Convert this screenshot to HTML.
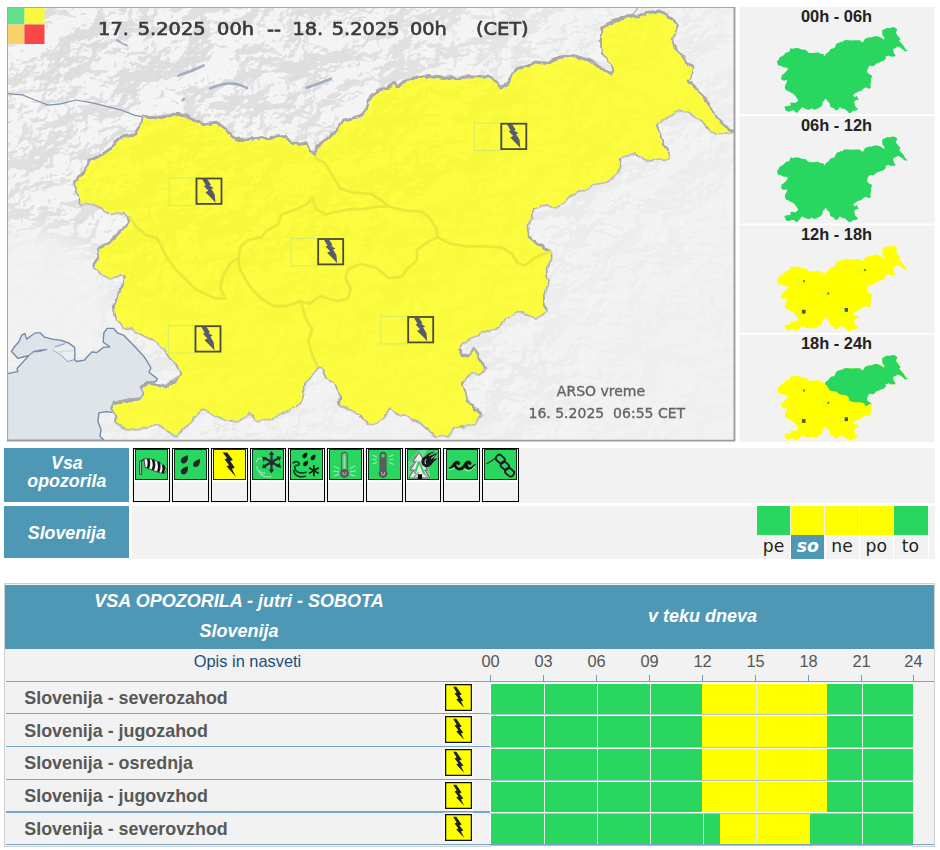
<!DOCTYPE html>
<html lang="sl"><head><meta charset="utf-8"><title>ARSO opozorila</title>
<style>
html,body{margin:0;padding:0;background:#fff}
body{width:940px;height:850px;position:relative;overflow:hidden;font-family:"Liberation Sans",sans-serif}
.abs{position:absolute}
.mt{filter:url(#b1)}
.lab{position:absolute;left:4.2px;width:125.3px;background:#4f98b5;color:#fff;font-weight:bold;font-style:italic;text-align:center;font-size:17.8px}
.gr{position:absolute;left:132px;width:802.5px;background:#f2f2f2}
.ic{position:absolute;top:447.8px;height:52px;border:1.4px solid #000;background:linear-gradient(#fff 0,#fff 33px,#f2f2f2 33px)}
.wp{position:absolute;top:.6px;width:32.4px;height:31px;background:#10301a}
.wi{position:absolute;left:.9px;top:.5px;width:30.6px;height:29.5px}
.sq{position:absolute;top:506px;width:33.2px;height:28.8px}
.dl{position:absolute;top:535px;width:33.2px;height:24px;text-align:center;font-family:"DejaVu Sans","Liberation Sans",sans-serif;font-size:17.2px;line-height:23px;color:#222}
.g{background:#29d65f}.y{background:#ffff00}
.th{position:absolute;top:585.3px;height:63.5px;background:#4f98b5;color:#fff;font-weight:bold;font-style:italic;text-align:center;font-size:18px}
.rl{position:absolute;left:5.5px;height:1.3px;background:#79a5c4}
.rn{position:absolute;left:24.3px;height:31px;line-height:31px;font-weight:bold;font-size:17.87px;color:#585858;white-space:nowrap}
.bi{position:absolute;left:444.8px;width:27px;height:27px;box-shadow:0 0 0 1.5px #f9f9f9}
.bi svg{display:block}
.bar{position:absolute;height:30.6px}
.bg2{position:absolute;left:490.3px;width:422.3px;height:32.6px;background:linear-gradient(#fff 0,#fff 30.6px,#b0c1dd 30.6px,#b0c1dd 31.6px,#fff 31.6px)}
.vs{position:absolute;width:1.2px;height:30.6px;background:#e3f1e6}
.hl{position:absolute;top:651.8px;width:30px;text-align:center;font-size:16.4px;color:#555}
.tk{position:absolute;top:675.3px;width:1.1px;height:6px;background:#6f9fc0}
</style></head><body>
<svg width="0" height="0" style="position:absolute"><defs><filter id="ib"><feGaussianBlur stdDeviation="0.3"/></filter></defs></svg>
<svg class="abs" style="left:0;top:0" width="940" height="450" viewBox="0 0 940 450">
<defs>
<path id="slo" d="M143 116.6 L148 119 L162 120 L167 116.6 L185 117.4 L198 124 L208 125.5 L215.7 124 L226 132 L236 141 L249 141 L261.7 139.6 L284.7 138.3 L292 144.7 L300 146 L305.3 145 L311.7 152.8 L315.5 157.9 L318 147.7 L328.3 140 L337.2 132.3 L343.6 122 L353.8 119.6 L365.3 115.7 L369 101.7 L378 91.5 L388.3 90.2 L393.4 85 L398.5 89 L407.4 81.3 L422.8 77.4 L443.2 80 L466.2 78.7 L489 78.7 L496.8 83.8 L499.4 89 L508.3 86.4 L513.4 76.2 L517.7 70.1 L529.1 67.6 L535.5 63.7 L545.7 65 L561 59.9 L573.8 57.3 L586.6 61.2 L599.4 67.6 L608.3 73.9 L612.1 76.5 L613.4 68.8 L610.9 62.4 L603.2 53.5 L601.9 43.3 L602.4 29.3 L609.6 25.4 L619.8 20.3 L630 16.5 L637.7 19 L647.9 15.2 L658.1 13.9 L667 16.5 L677.2 25.4 L676 31.8 L670.9 38.2 L673.4 48.4 L681.1 56.1 L686.2 65 L692.6 67.6 L691.3 76.5 L686.2 80.3 L693.8 89.3 L704 99.5 L711.7 109.7 L716.8 119.9 L724.5 127.6 L732.1 131.4 L721.9 132.7 L711.7 131.4 L706.6 125 L698.9 118.6 L688.7 112.2 L679.8 109.7 L670.9 114.8 L660.6 119.9 L655.5 126.3 L659.4 135.2 L661.9 145.4 L668.3 150.5 L667 158.2 L655.5 158.2 L645.3 159.5 L635.1 153.1 L627.4 155.6 L618.5 158.2 L621.1 167.1 L614.7 174.8 L607 181.2 L594.3 183.7 L584 188.8 L571.3 193.9 L563.4 203 L555.7 206.8 L543 204.3 L534 208.1 L531.5 217 L526.4 226 L527.7 237.4 L537.9 246.4 L550.6 251.5 L550.6 259.1 L545.5 268.1 L546.8 282.1 L543 294.9 L543 306.4 L546.8 311.5 L535.3 317.9 L527.7 312.8 L518.7 311.5 L512.3 314 L504.7 319.1 L498.3 326.8 L484.3 330.6 L474 335.7 L461.3 343.4 L457.4 349.8 L462.6 357.4 L468.9 356.2 L474 351.1 L477.9 358.7 L484.3 368.9 L479.1 374 L471.5 371.5 L469.1 373.6 L461.5 382.6 L465.3 395.3 L467.9 404.3 L480.6 415.7 L474.3 423.4 L464 426 L455.1 426 L447.4 434.9 L436 436.2 L425.7 426 L415.5 418.3 L407.9 415.7 L400.2 414.5 L390 406.8 L384.9 415.7 L377.2 423.4 L367 423.4 L360.6 413.2 L351.7 410.6 L340.2 404.3 L341.5 395.3 L336.4 385.1 L327.4 377.4 L322.3 367.2 L317.2 366 L313.4 373.6 L304.5 382.6 L301.9 397.9 L294.3 406.8 L282.8 411.9 L270 419.6 L257.9 419.6 L248.9 413.2 L238.7 420.9 L226 419.6 L213.2 413.2 L201.7 408.1 L197.9 411.9 L192.8 418.3 L185.1 426 L177.4 434.9 L169.8 433.6 L162.1 426 L157 423.4 L146.8 426 L136.6 429.8 L126.4 428.5 L117.4 423.4 L117.4 415.7 L112.3 409.4 L114.9 404.3 L128.9 401.7 L141.7 400.4 L145.5 395.3 L141.7 387.7 L149.4 385.1 L159.6 386.4 L167.2 387.7 L176.2 381.3 L182.6 373.6 L174.9 362.1 L167.2 351.9 L157 341.7 L144.3 335.3 L134 328.9 L123.8 326.4 L117.4 320 L114.9 308.5 L118.7 295.7 L125.1 285.5 L125.9 275.3 L120 274 L111.1 277.9 L102.1 274 L94.5 266.4 L99.6 259.6 L98.3 250.6 L109.8 244.3 L118.7 235.3 L127.7 226.4 L130 217.4 L123.8 212.3 L111 212.3 L98.3 206 L88 202 L81.7 204.7 L79 194.5 L75.3 183 L85.5 172.8 L88 163.8 L100.9 157.4 L113.6 148.5 L116 142 L126.4 137 L136.6 135.7 L141 128Z"/>
<path id="ne" d="M315.5 157.9 L318 147.7 L328.3 140 L337.2 132.3 L343.6 122 L353.8 119.6 L365.3 115.7 L369 101.7 L378 91.5 L388.3 90.2 L393.4 85 L398.5 89 L407.4 81.3 L422.8 77.4 L443.2 80 L466.2 78.7 L489 78.7 L496.8 83.8 L499.4 89 L508.3 86.4 L513.4 76.2 L517.7 70.1 L529.1 67.6 L535.5 63.7 L545.7 65 L561 59.9 L573.8 57.3 L586.6 61.2 L599.4 67.6 L608.3 73.9 L612.1 76.5 L613.4 68.8 L610.9 62.4 L603.2 53.5 L601.9 43.3 L602.4 29.3 L609.6 25.4 L619.8 20.3 L630 16.5 L637.7 19 L647.9 15.2 L658.1 13.9 L667 16.5 L677.2 25.4 L676 31.8 L670.9 38.2 L673.4 48.4 L681.1 56.1 L686.2 65 L692.6 67.6 L691.3 76.5 L686.2 80.3 L693.8 89.3 L704 99.5 L711.7 109.7 L716.8 119.9 L724.5 127.6 L732.1 131.4 L721.9 132.7 L711.7 131.4 L706.6 125 L698.9 118.6 L688.7 112.2 L679.8 109.7 L670.9 114.8 L660.6 119.9 L655.5 126.3 L659.4 135.2 L661.9 145.4 L668.3 150.5 L667 158.2 L655.5 158.2 L645.3 159.5 L635.1 153.1 L627.4 155.6 L618.5 158.2 L621.1 167.1 L614.7 174.8 L607 181.2 L594.3 183.7 L584 188.8 L571.3 193.9 L563.4 203 L555.7 206.8 L543 204.3 L534 208.1 L531.5 217 L526.4 226 L527.7 237.4 L537.9 246.4 L550.6 251.5 L543 254 L532.8 259.1 L525.1 265.5 L517.4 263 L512.3 254 L502.1 247.7 L484.3 246.4 L466.4 246.4 L451.1 243.8 L437.4 237.2 L436.2 228.3 L429.8 218.1 L422.1 211.7 L404.3 210.4 L388.9 206.6 L381.3 200.2 L371.1 193.8 L353.2 192.6 L340.4 188.7 L332.8 176 L325.1 163.2 L315.5 157.9Z"/>
<clipPath id="sloclip"><use href="#slo"/></clipPath>
<clipPath id="mapclip"><rect x="7" y="7" width="728" height="434"/></clipPath>
<filter id="b1"><feGaussianBlur stdDeviation="0.45"/></filter>
<filter id="rough" x="0" y="0" width="940" height="450" filterUnits="userSpaceOnUse"><feTurbulence type="fractalNoise" baseFrequency="0.11" numOctaves="2" seed="7" result="t"/><feDisplacementMap in="SourceGraphic" in2="t" scale="5" xChannelSelector="R" yChannelSelector="G"/></filter>
<filter id="b2"><feGaussianBlur stdDeviation="0.7"/></filter>
<filter id="relief" x="0" y="0" width="100%" height="100%" color-interpolation-filters="sRGB">
<feTurbulence type="fractalNoise" baseFrequency="0.02 0.027" numOctaves="5" seed="4" result="n"/>
<feDiffuseLighting in="n" surfaceScale="30" diffuseConstant="1.15" lighting-color="#ffffff" result="l"><feDistantLight azimuth="230" elevation="52"/></feDiffuseLighting>
<feComponentTransfer in="l"><feFuncR type="table" tableValues="0.865 0.865 0.87 0.872 0.876 0.885 0.935 0.96 0.96"/><feFuncG type="table" tableValues="0.865 0.865 0.87 0.872 0.876 0.885 0.935 0.96 0.96"/><feFuncB type="table" tableValues="0.865 0.865 0.87 0.872 0.876 0.885 0.935 0.96 0.96"/></feComponentTransfer>
</filter>
<radialGradient id="fade1" cx="0.15" cy="0.1" r="0.95"><stop offset="0" stop-color="#fff" stop-opacity="1"/><stop offset="0.45" stop-color="#fff" stop-opacity="0.85"/><stop offset="0.7" stop-color="#fff" stop-opacity="0.4"/><stop offset="1" stop-color="#fff" stop-opacity="0.15"/></radialGradient>
<radialGradient id="fade3"><stop offset="0" stop-color="#000" stop-opacity="0.9"/><stop offset="0.65" stop-color="#000" stop-opacity="0.8"/><stop offset="1" stop-color="#000" stop-opacity="0"/></radialGradient>
<radialGradient id="fade2"><stop offset="0" stop-color="#fff" stop-opacity="0.3"/><stop offset="1" stop-color="#fff" stop-opacity="0"/></radialGradient>
<mask id="rm"><rect x="7" y="7" width="728" height="434" fill="url(#fade1)"/><ellipse cx="500" cy="380" rx="110" ry="80" fill="url(#fade2)"/><ellipse cx="240" cy="430" rx="120" ry="40" fill="url(#fade2)"/><ellipse cx="30" cy="300" rx="100" ry="85" fill="url(#fade3)"/></mask>
</defs>
<rect x="7" y="7" width="728" height="434" fill="#f3f3f3"/>
<g clip-path="url(#mapclip)">
<g mask="url(#rm)"><rect x="7" y="7" width="728" height="434" filter="url(#relief)"/></g>
<path d="M7.4 373.6 L17.8 371.7 L17.1 368.5 L22.9 362.1 L28.6 355.7 L23 357 L17.8 358.3 L11.4 351.3 L15 346 L19 341.7 L21.6 335.3 L24.8 333.4 L26.7 339.1 L31.8 335.3 L35.6 332.8 L40.1 332.8 L44.6 337.2 L52.2 339.1 L61.2 340.4 L68.8 343 L74.6 347.4 L75 354 L74.6 359.6 L76.5 361.5 L84.2 360.2 L88 356 L91.8 351.9 L96.9 352.6 L103.3 347.4 L109.7 346.8 L103.3 342.3 L103.5 337 L103.9 332.8 L107.1 328.3 L113.5 328.3 L117.3 332.8 L123.4 335.1 L134 345.7 L144.7 357.4 L151 368 L148.9 372.3 L157.4 378.7 L155.3 381.9 L146.8 381.9 L140.4 387.2 L146.8 393.6 L142.6 397.9 L127.7 400 L112.8 404.3 L116 412.8 L106.4 411.7 L98.9 412.8 L97.9 421.3 L101 429.8 L100 436.2 L104.3 440.4 L7.4 440.4Z" fill="#dde5eb" stroke="#7487a8" stroke-width="1.35" stroke-linejoin="round"/>
<g fill="none" stroke="#7d90ad" stroke-width="0.9"><path d="M28.6 355.7 L33 351.5 L40 350 L47.1 349.4 L40 351.5 L33.7 351.9Z" fill="#6f84a6"/><path d="M52.9 350 L61 355 L67.6 361.5 L74.6 359.6 M54.8 346.8 L65 343.6 M57.3 351.9 L74.6 350.6 M59.9 353.8 L63.7 351.3" /><path d="M53 350 L62 355.5 L67.6 361 L74 359 L74 348 L66 344 Z" fill="#f0f2f4" stroke="none" opacity=".7"/></g>
<path d="M7 93.6 L22.3 94.9 L35.1 100 L47.9 105.1 L60.6 103.8 L75.9 100 L91.3 102.6 L106.6 106.4 L121.9 110.2 L134.7 115.3 L142.3 116.6" fill="none" stroke="#7e91ad" stroke-width="1.2"/>
<g fill="none" stroke="#8a9bb5" stroke-linecap="round" opacity=".75"><path d="M178 75.7 Q190 72 203.6 65.5" stroke-width="2.6"/><path d="M210 88.5 Q220 84 229 83.5 T247 88" stroke-width="2.6"/><path d="M182.5 100.5 l1.5 -2" stroke-width="2.4"/><path d="M306.6 87.7 Q318 84 330.9 78.7" stroke-width="2.6"/><path d="M117 40 Q122 44 127 45.5" stroke-width="2"/><path d="M638 7 Q636 12 631 16" stroke-width="1.2"/><path d="M725 128 Q731 131 735 131" stroke-width="1.2"/></g>
<g filter="url(#rough)"><use href="#slo" fill="none" stroke="#c2c2c0" stroke-width="3.8" stroke-linejoin="round"/><use href="#slo" transform="translate(-.3 -1.4)" fill="none" stroke="#a9a9a7" stroke-width="3.6" stroke-linejoin="round"/>
<g clip-path="url(#sloclip)"><rect x="60" y="7" width="680" height="434" fill="#f3f3f3"/><g mask="url(#rm)"><rect x="7" y="7" width="728" height="434" filter="url(#relief)"/></g></g>
<use href="#slo" fill="#ffff00" fill-opacity="0.74"/></g>
<g fill="none" stroke="#e8e63a" stroke-width="2.8" stroke-linejoin="round" stroke-linecap="round" opacity="0.9" filter="url(#b2)">
<path d="M312.3 197.7 L307.2 204 L297 209.1 L281.7 214.3 L277.9 224.5 L266.4 230.9 L261.3 237.2 L248.5 239.8 L240.9 246.2 L238.3 257.7 L239.6 267.9 L244.7 278.1 L251.1 288.3 L261.3 298.5 L274 306.2 L286.8 306.2 L299.6 301.1 L309.8 303.6 L320 296 L327.7 298.5 L337.9 301.1 L348.1 298.5 L350.6 288.3 L345.5 278.1 L348.1 269.1 L360.9 264 L376.2 267.9 L388.9 278.1 L401.7 276.8 L406.8 269.1 L417 260.2 L417 250 L427.2 242.3 L437.4 237.2 L436.2 228.3 L429.8 218.1 L422.1 211.7 L404.3 210.4 L388.9 206.6 L376.2 206.6 L363.4 209.1 L350.6 209.1 L337.9 211.7 L325.1 214.3 L316.2 209.1Z"/>
<path d="M315.5 157.9 L325.1 163.2 L332.8 176 L340.4 188.7 L353.2 192.6 L371.1 193.8 L381.3 200.2 L388.9 206.6"/>
<path d="M130 217.4 L136.6 227.7 L146.8 235.3 L157 237.9 L162.1 248.1 L167.2 258.3 L174.9 268.5 L185.1 278.7 L195.3 288.9 L205.5 294 L215.3 298.5 L225.5 298.5 L220.4 288.3 L223 275.5 L230.6 262.8 L238.3 257.7"/>
<path d="M299.6 301.1 L301.9 304.7 L305.7 318.7 L312.1 328.9 L308.3 341.7 L312.1 354.5 L317.2 366"/>
<path d="M437.4 237.2 L451.1 243.8 L466.4 246.4 L484.3 246.4 L502.1 247.7 L512.3 254 L517.4 263 L525.1 265.5 L532.8 259.1 L543 254 L550.6 251.5"/>
</g>
<rect x="169.3" y="177.9" width="26.5" height="27.5" fill="none" stroke="#cdee6a" stroke-width="1"/>
<rect x="196.5" y="178.5" width="25" height="25.4" fill="none" stroke="#4b4a3c" stroke-width="1.8"/>
<path transform="translate(195.5 177.5)" d="M6.6 1.4 L11.8 1.4 L15.5 7.4 L13.6 7.8 L18.1 10.4 L15.9 11.5 L19.2 17.1 L20 25.3 L16.6 21.5 L9.9 14.8 L12.9 13.3 L8.4 8.5 L10.3 7.8Z" fill="#565b6c" filter="url(#b1)"/>
<rect x="474.1" y="123.1" width="26.5" height="27.5" fill="none" stroke="#cdee6a" stroke-width="1"/>
<rect x="501.3" y="123.7" width="25" height="25.4" fill="none" stroke="#4b4a3c" stroke-width="1.8"/>
<path transform="translate(500.3 122.7)" d="M6.6 1.4 L11.8 1.4 L15.5 7.4 L13.6 7.8 L18.1 10.4 L15.9 11.5 L19.2 17.1 L20 25.3 L16.6 21.5 L9.9 14.8 L12.9 13.3 L8.4 8.5 L10.3 7.8Z" fill="#565b6c" filter="url(#b1)"/>
<rect x="291" y="238.4" width="26.5" height="27.5" fill="none" stroke="#cdee6a" stroke-width="1"/>
<rect x="318.2" y="239" width="25" height="25.4" fill="none" stroke="#4b4a3c" stroke-width="1.8"/>
<path transform="translate(317.2 238)" d="M6.6 1.4 L11.8 1.4 L15.5 7.4 L13.6 7.8 L18.1 10.4 L15.9 11.5 L19.2 17.1 L20 25.3 L16.6 21.5 L9.9 14.8 L12.9 13.3 L8.4 8.5 L10.3 7.8Z" fill="#565b6c" filter="url(#b1)"/>
<rect x="168.3" y="325.6" width="26.5" height="27.5" fill="none" stroke="#cdee6a" stroke-width="1"/>
<rect x="195.5" y="326.2" width="25" height="25.4" fill="none" stroke="#4b4a3c" stroke-width="1.8"/>
<path transform="translate(194.5 325.2)" d="M6.6 1.4 L11.8 1.4 L15.5 7.4 L13.6 7.8 L18.1 10.4 L15.9 11.5 L19.2 17.1 L20 25.3 L16.6 21.5 L9.9 14.8 L12.9 13.3 L8.4 8.5 L10.3 7.8Z" fill="#565b6c" filter="url(#b1)"/>
<rect x="381" y="316.4" width="26.5" height="27.5" fill="none" stroke="#cdee6a" stroke-width="1"/>
<rect x="408.2" y="317" width="25" height="25.4" fill="none" stroke="#4b4a3c" stroke-width="1.8"/>
<path transform="translate(407.2 316)" d="M6.6 1.4 L11.8 1.4 L15.5 7.4 L13.6 7.8 L18.1 10.4 L15.9 11.5 L19.2 17.1 L20 25.3 L16.6 21.5 L9.9 14.8 L12.9 13.3 L8.4 8.5 L10.3 7.8Z" fill="#565b6c" filter="url(#b1)"/>
</g>
<g filter="url(#b1)"><rect x="7" y="7" width="17.5" height="17.5" fill="#62df8b"/><rect x="24.5" y="7" width="20" height="17.5" fill="#f9f840"/><rect x="7" y="24.5" width="17.5" height="19.5" fill="#f8d268"/><rect x="24.5" y="24.5" width="20" height="19.5" fill="#f9464a"/></g>
<path d="M7.5 441 V7.5 H735" fill="none" stroke="#a8a8a8" stroke-width="1"/>
<path d="M734.5 7 V440.7 H7" fill="none" stroke="#9a9a9a" stroke-width="1.8"/>
<text transform="translate(98.1 35.2) scale(1.09 1)" font-family="DejaVu Sans, Liberation Sans, sans-serif" font-size="17.8" fill="#3a3a3a" stroke="#3a3a3a" stroke-width="0.65" class="mt">17.</text>
<text transform="translate(137.7 35.2) scale(1.09 1)" font-family="DejaVu Sans, Liberation Sans, sans-serif" font-size="17.8" fill="#3a3a3a" stroke="#3a3a3a" stroke-width="0.65" class="mt">5.2025</text>
<text transform="translate(217.1 35.2) scale(1.09 1)" font-family="DejaVu Sans, Liberation Sans, sans-serif" font-size="17.8" fill="#3a3a3a" stroke="#3a3a3a" stroke-width="0.65" class="mt">00h</text>
<text transform="translate(267 35.2) scale(1.09 1)" font-family="DejaVu Sans, Liberation Sans, sans-serif" font-size="17.8" fill="#3a3a3a" stroke="#3a3a3a" stroke-width="0.65" class="mt">--</text>
<text transform="translate(292.4 35.2) scale(1.09 1)" font-family="DejaVu Sans, Liberation Sans, sans-serif" font-size="17.8" fill="#3a3a3a" stroke="#3a3a3a" stroke-width="0.65" class="mt">18.</text>
<text transform="translate(331.7 35.2) scale(1.09 1)" font-family="DejaVu Sans, Liberation Sans, sans-serif" font-size="17.8" fill="#3a3a3a" stroke="#3a3a3a" stroke-width="0.65" class="mt">5.2025</text>
<text transform="translate(409.9 35.2) scale(1.09 1)" font-family="DejaVu Sans, Liberation Sans, sans-serif" font-size="17.8" fill="#3a3a3a" stroke="#3a3a3a" stroke-width="0.65" class="mt">00h</text>
<text transform="translate(475.9 35.2) scale(1.09 1)" font-family="DejaVu Sans, Liberation Sans, sans-serif" font-size="17.8" fill="#3a3a3a" stroke="#3a3a3a" stroke-width="0.65" class="mt">(CET)</text>
<text x="601" y="395.6" text-anchor="middle" font-family="DejaVu Sans, Liberation Sans, sans-serif" font-size="14" fill="#646464" stroke="#646464" stroke-width="0.35" class="mt">ARSO vreme</text>
<text x="528.5" y="418.2" font-family="DejaVu Sans, Liberation Sans, sans-serif" font-size="14" fill="#646464" stroke="#646464" stroke-width="0.35" class="mt" xml:space="preserve">16. 5.2025  06:55 CET</text>
<rect x="739.5" y="6.8" width="195" height="107.4" fill="#f2f2f2"/>
<g transform="translate(761.8 24.3) scale(0.2 0.2032)"><use href="#slo" fill="#29d65f"/></g>
<text x="836.5" y="21.5" text-anchor="middle" font-family="Liberation Sans, sans-serif" font-weight="bold" font-size="16.4" fill="#222">00h - 06h</text>
<rect x="739.5" y="116.1" width="195" height="107.4" fill="#f2f2f2"/>
<g transform="translate(761.8 133.6) scale(0.2 0.2032)"><use href="#slo" fill="#29d65f"/></g>
<text x="836.5" y="130.8" text-anchor="middle" font-family="Liberation Sans, sans-serif" font-weight="bold" font-size="16.4" fill="#222">06h - 12h</text>
<rect x="739.5" y="225.4" width="195" height="107.4" fill="#f2f2f2"/>
<g transform="translate(761.8 242.9) scale(0.2 0.2032)"><use href="#slo" fill="#ffff00"/></g>
<rect x="803.2" y="280.1" width="1.6" height="2.2" fill="#3a3a20" opacity="0.7"/>
<rect x="798" y="279.6" width="4" height="4.5" fill="none" stroke="#c9ef50" stroke-width="0.5"/>
<rect x="864.2" y="269" width="1.6" height="2.2" fill="#3a3a20" opacity="0.7"/>
<rect x="859" y="268.5" width="4" height="4.5" fill="none" stroke="#c9ef50" stroke-width="0.5"/>
<rect x="827.5" y="292.4" width="1.6" height="2.2" fill="#3a3a20" opacity="0.7"/>
<rect x="822.3" y="291.9" width="4" height="4.5" fill="none" stroke="#c9ef50" stroke-width="0.5"/>
<rect x="801.9" y="309.8" width="3.6" height="3.8" fill="#2a2a18" opacity="0.8"/>
<rect x="797.8" y="309.6" width="4" height="4.5" fill="none" stroke="#c9ef50" stroke-width="0.5"/>
<rect x="844.4" y="308" width="3.6" height="3.8" fill="#2a2a18" opacity="0.8"/>
<rect x="840.3" y="307.8" width="4" height="4.5" fill="none" stroke="#c9ef50" stroke-width="0.5"/>
<text x="836.5" y="240.1" text-anchor="middle" font-family="Liberation Sans, sans-serif" font-weight="bold" font-size="16.4" fill="#222">12h - 18h</text>
<rect x="739.5" y="334.7" width="195" height="107.4" fill="#f2f2f2"/>
<g transform="translate(761.8 352.2) scale(0.2 0.2032)"><use href="#slo" fill="#ffff00"/><use href="#ne" fill="#29d65f"/></g>
<rect x="803.2" y="389.4" width="1.6" height="2.2" fill="#3a3a20" opacity="0.7"/>
<rect x="798" y="388.9" width="4" height="4.5" fill="none" stroke="#c9ef50" stroke-width="0.5"/>
<rect x="827.5" y="401.7" width="1.6" height="2.2" fill="#3a3a20" opacity="0.7"/>
<rect x="822.3" y="401.2" width="4" height="4.5" fill="none" stroke="#c9ef50" stroke-width="0.5"/>
<rect x="801.9" y="419.1" width="3.6" height="3.8" fill="#2a2a18" opacity="0.8"/>
<rect x="797.8" y="418.9" width="4" height="4.5" fill="none" stroke="#c9ef50" stroke-width="0.5"/>
<rect x="844.4" y="417.3" width="3.6" height="3.8" fill="#2a2a18" opacity="0.8"/>
<rect x="840.3" y="417.1" width="4" height="4.5" fill="none" stroke="#c9ef50" stroke-width="0.5"/>
<text x="836.5" y="349.4" text-anchor="middle" font-family="Liberation Sans, sans-serif" font-weight="bold" font-size="16.4" fill="#222">18h - 24h</text>
</svg>
<div class="gr" style="top:447.5px;height:55.5px"></div>
<div class="gr" style="top:506px;height:52.5px"></div>
<div class="lab" style="top:447.5px;height:54.4px;line-height:17.7px"><div style="padding-top:7.4px">Vsa<br>opozorila</div></div>
<div class="lab" style="top:506.3px;height:51.5px;line-height:55px">Slovenija</div>
<div class="ic" style="left:132.8px;width:35.5px"><div class="wp" style="left:1.6px"><svg class="wi" width="32" height="31" viewBox="0 0 32 31" style="background:#29d65f"><g filter="url(#ib)"><path d="M4.9 26 V11.4" stroke="#222" stroke-width="2.8"/><path d="M4.9 25.5 V12" stroke="#ddd" stroke-width="1"/><path d="M5 11.5 L8.5 10" stroke="#222" stroke-width="1.2"/><path d="M8.3 9.3 Q14 8.5 19 10.5 Q26 13 31.3 19 Q32 22 30.8 23.6 Q28 25.5 24 23.8 L9.5 18.2 Z" fill="#f4f4f4" stroke="#222" stroke-width=".8"/><g fill="none" stroke="#151515" stroke-width="2.7"><path d="M12.6 9.4 q2 4.5 -.2 9.8"/><path d="M17.8 10.3 q2.2 5 -.2 10.6"/><path d="M23.3 12.4 q2.3 5 -.2 10.7"/><path d="M28.2 15.8 q2 4 -.4 8.5"/></g></g></svg></div></div>
<div class="ic" style="left:172.3px;width:34.8px"><div class="wp" style="left:1.2px"><svg class="wi" width="32" height="31" viewBox="0 0 32 31" style="background:#29d65f"><g filter="url(#ib)"><g fill="#262626"><path d="M13.2 5.2 q1.2 4.5 -1.5 7.7 q-3 2.5 -5.3 0 q-1.2 -3.5 2.3 -5.5 q3 -1 4.5 -2.2z"/><path d="M26 9.2 q1 4.5 -1.7 7.5 q-3 2.3 -5.1 0 q-1 -3.3 2.3 -5.3 q3 -1 4.5 -2.2z"/><path d="M13.2 16.8 q1.2 4.5 -1.5 7.7 q-3 2.5 -5.3 0 q-1.2 -3.5 2.3 -5.5 q3 -1 4.5 -2.2z"/></g></g></svg></div></div>
<div class="ic" style="left:211.1px;width:34.5px"><div class="wp" style="left:1.1px"><svg class="wi" width="32" height="31" viewBox="0 0 32 31" style="background:#ffff00"><g filter="url(#ib)"><path d="M9 2.7 L13.8 2.7 L19.8 10.6 L17 11.6 L21.7 18.6 L18.8 19.7 L23 28.3 L13 17.2 L15.7 16 L11 9.7 L13.7 8.7Z" fill="#20242c"/></g></svg></div></div>
<div class="ic" style="left:249.6px;width:34.7px"><div class="wp" style="left:1.2px"><svg class="wi" width="32" height="31" viewBox="0 0 32 31" style="background:#29d65f"><g filter="url(#ib)"><g stroke="#dcdcdc" stroke-width="1.2" fill="none" stroke-dasharray="2.2 .8" opacity=".9"><path d="M3.3 13.2 q1.2-5.2 6.2-4.5"/><path d="M3.6 17.5 q1.5 6 7 9"/><path d="M8 25.5 q5 4.5 12 1.8"/><path d="M5.5 21 q3 3 8 3.5"/></g><g stroke="#2b2b33" stroke-width="2.3" fill="none"><path d="M19.4 3.6 V22 M11.4 8.2 L27.4 17.4 M27.4 8.2 L11.4 17.4"/></g><g fill="#2b2b33"><path d="M19.4 1.2 l3 3.8 h-6z M19.4 24.4 l3 -3.8 h-6z M9.3 7 l4.8 .7 l-3 5z M29.5 18.6 l-4.8 -.7 l3 -5z M29.5 7 l-1.8 4.5 l-3 -5z M9.3 18.6 l1.8 -4.5 l3 5z"/></g><circle cx="19.4" cy="12.8" r="2.7" fill="#2b2b33"/></g></svg></div></div>
<div class="ic" style="left:288.3px;width:34.8px"><div class="wp" style="left:1.2px"><svg class="wi" width="32" height="31" viewBox="0 0 32 31" style="background:#29d65f"><g filter="url(#ib)"><g fill="#0c1a10"><path d="M16.8 2.3 q1 3.3 -1 5.5 q-2.2 1.7 -3.8 0 q-.8 -2.5 1.7 -4 q2 -.6 3.1 -1.5z"/><path d="M25.4 4.4 q1 3.3 -1 5.5 q-2.2 1.7 -3.8 0 q-.8 -2.5 1.7 -4 q2 -.6 3.1 -1.5z"/><path d="M17.6 10.7 q1 3.3 -1 5.5 q-2.2 1.7 -3.8 0 q-.8 -2.5 1.7 -4 q2 -.6 3.1 -1.5z"/></g><g fill="none" stroke="#0b3a1c" stroke-width="1.7" stroke-linecap="round"><path d="M2.3 13.6 q3.5 -2.8 6.2 .3 q.4 3 -3.3 2.3"/><path d="M3.8 17.5 q.5 5.5 5 6.3 q4 .6 7 -.4"/><path d="M2.8 21.5 q.8 5.5 6 6.5 q4 .4 6 -.3"/></g><path d="M24 15.8 v11.8 M18.9 18.7 l10.2 5.9 M29.1 18.7 l-10.2 5.9" stroke="#0c1a10" stroke-width="1.7"/></g></svg></div></div>
<div class="ic" style="left:327.1px;width:35.2px"><div class="wp" style="left:1.4px"><svg class="wi" width="32" height="31" viewBox="0 0 32 31" style="background:#29d65f"><g filter="url(#ib)"><g stroke="#c9e6d2" stroke-width="1.1" opacity=".85"><path d="M3.8 17.2 L9.6 19.8 M3.2 22 L9.4 23 M4.5 27.4 L9.6 25.5 M20.6 19.8 L26.4 16.6 M21 23 L27 21.8 M20.8 25.5 L26.2 27.7"/></g><path d="M12.1 21 V5.6 a3 3 0 0 1 6 0 V21" fill="#58d37d" stroke="#5c5c5c" stroke-width="1.3"/><path d="M15.1 6 V20" stroke="#9ad9ad" stroke-width="1.4"/><circle cx="15.1" cy="24.6" r="4.7" fill="#5a5a5a"/><path d="M13.6 23.3 v1.5 a1.5 1.5 0 0 0 3 0 v-1.5" fill="none" stroke="#cfcfcf" stroke-width="1"/></g></svg></div></div>
<div class="ic" style="left:366.3px;width:34.6px"><div class="wp" style="left:1.1px"><svg class="wi" width="32" height="31" viewBox="0 0 32 31" style="background:#29d65f"><g filter="url(#ib)"><g stroke="#c9e6d2" stroke-width="1.1" opacity=".85"><path d="M3.8 5.1 L8.3 7.7 M3.8 14.7 L8.3 12.8 M4 10 L7.6 10.2 M21 7 L25.5 5.1 M21 12.8 L25.5 15.3 M21.8 10 L25.4 10"/></g><path d="M11.7 21 V5.6 a3 3 0 0 1 6 0 V21" fill="#5d5d5d" stroke="#555" stroke-width="1.3"/><path d="M13 8 V5.6 a1.7 1.7 0 0 1 3.4 0 V8z" fill="#43d570"/><circle cx="14.7" cy="24.6" r="4.7" fill="#5a5a5a"/><path d="M13.2 23.3 v1.5 a1.5 1.5 0 0 0 3 0 v-1.5" fill="none" stroke="#cfcfcf" stroke-width="1"/></g></svg></div></div>
<div class="ic" style="left:404.9px;width:34.5px"><div class="wp" style="left:1.1px"><svg class="wi" width="32" height="31" viewBox="0 0 32 31" style="background:#29d65f"><g filter="url(#ib)"><path d="M0 31 V12 L11 1 L14 0 H20 L16 8 L22 20 L24 31Z" fill="#9fe5b3" opacity=".55"/><path d="M11.5 2.6 L5 12.5 H8 L2.2 21 H6 L.8 29.4 H23 L17.5 21 H20.5 L15.5 12.5 H18Z" fill="#ececec" stroke="#5a5a5a" stroke-width="1"/><g stroke="#8a8a8a" stroke-width="1.1"><path d="M2 12 L10 4 M1.5 19 L9 11.5 M2 26 L8 20 M6 28.5 L11 23.5 M16 24 L21 28.5"/></g><path d="M11.5 12 L7 25 M11.5 12 L17 25" stroke="#3ccf6b" stroke-width="2.2"/><circle cx="19.6" cy="12.3" r="5.7" fill="#15161a"/><path d="M17 8 Q21 2.5 27.5 1.5 Q25 4 24.5 6 Q28 3.5 31 3.5 Q27.5 6.5 26.5 10 Q29.5 8.5 31 9 Q27 12 24 16 Z" fill="#15161a"/><path d="M19 9.5 q-2.5 2.5 -.5 5.5 M22 6.5 l3.5-3 M24 9 l4-3" stroke="#e8e8e8" stroke-width="1" fill="none"/><path d="M10.2 25.5 h4.5 v5.5 h-4.5z" fill="#111"/></g></svg></div></div>
<div class="ic" style="left:443.4px;width:35px"><div class="wp" style="left:1.3px"><svg class="wi" width="32" height="31" viewBox="0 0 32 31" style="background:#29d65f"><g filter="url(#ib)"><path d="M1.8 18.6 Q5 17 6.5 14 Q9.5 9.5 13 12.3 Q14.5 14.5 12 16 Q10.5 14 9.5 15.6 Q11 20.5 15.5 17.5 Q17 16 18.5 13.5 Q21.5 9.5 25 12.3 Q26.5 14.5 24 16 Q22.5 14 21.5 15.6 Q22.5 19.5 25.5 17.5 Q27 16 29.8 14.5 L30 15.8 Q27.5 17.5 26 19.8 Q22 22.5 18.8 18.3 Q15 23 10.5 20.8 Q8.5 19.5 7.5 17.6 Q5 19.5 2 20z" fill="#111"/><path d="M2 20.8 Q6 20.5 8 19 M18 20.5 Q22 23.5 26 20.5 L29.5 16.5" stroke="#e6e6e6" stroke-width=".8" fill="none"/></g></svg></div></div>
<div class="ic" style="left:482.4px;width:34.2px"><div class="wp" style="left:0.9px"><svg class="wi" width="32" height="31" viewBox="0 0 32 31" style="background:#29d65f"><g filter="url(#ib)"><path d="M1.5 14.7 L8.6 10.2 L12 7.7" stroke="#333" stroke-width="1.2" fill="none"/><g fill="none" stroke="#1c1c1c" stroke-width="1.9"><rect x="11.2" y="6" width="9.6" height="7" rx="3" transform="rotate(40 16 9.5)"/><rect x="16.2" y="13.2" width="9" height="6.6" rx="3" transform="rotate(40 20.7 16.5)"/><rect x="21" y="19.8" width="9.6" height="7" rx="3" transform="rotate(40 25.8 23.3)"/></g></g></svg></div></div>
<div class="sq g" style="left:757px"></div><div class="sq y" style="left:791.2px"></div><div class="sq y" style="left:825.4px"></div><div class="sq y" style="left:859.6px"></div><div class="sq g" style="left:893.8px;width:34px"></div>
<div class="dl" style="left:757px">pe</div><div class="dl" style="left:791.2px;background:#4f98b5;color:#fff;font-weight:bold;font-style:italic">so</div><div class="dl" style="left:825.4px">ne</div><div class="dl" style="left:859.6px">po</div><div class="dl" style="left:893.8px">to</div>
<div class="abs" style="left:790.3px;top:535px;width:.9px;height:24px;background:#fff"></div><div class="abs" style="left:824.5px;top:535px;width:.9px;height:24px;background:#fff"></div><div class="abs" style="left:858.7px;top:535px;width:.9px;height:24px;background:#fff"></div><div class="abs" style="left:892.9px;top:535px;width:.9px;height:24px;background:#fff"></div><div class="abs" style="left:927.9px;top:535px;width:1.1px;height:24px;background:#fff"></div>
<div class="abs" style="left:4px;top:582.5px;width:930.6px;height:264px;border:1px solid #cfcfcf;box-sizing:border-box;background:#f2f2f2"></div>
<div class="th" style="left:5px;width:928.6px"></div>
<div class="th" style="left:5.5px;width:467px;background:none"><div style="padding-top:2.2px;line-height:29.3px">VSA OPOZORILA - jutri - SOBOTA<br>Slovenija</div></div>
<div class="th" style="left:472px;width:461px;background:none;line-height:63px">v teku dneva</div>
<div class="abs" style="left:147.5px;top:651.7px;width:200px;text-align:center;font-size:16.4px;color:#1b4f7c">Opis in nasveti</div>
<div class="rl" style="top:680.5px;width:928px"></div>
<div class="rn" style="top:683px">Slovenija - severozahod</div>
<div class="bi" style="top:683.6px"><svg width="27" height="27" viewBox="0 0 27 27"><rect x=".6" y=".6" width="25.8" height="25.8" fill="#ffff00" stroke="#111" stroke-width="1.3"/><path filter="url(#ib)" d="M8.2 2.8 L11.3 2.8 L16.6 10.5 L14.4 11.4 L18.3 16.5 L16.1 17.3 L19.1 23.8 L11.3 15.4 L13.3 14.2 L9.6 9.6 L11.6 8.6Z" fill="#1d2230"/></svg></div>
<div class="bg2" style="top:683.4px"></div>
<div class="bar g" style="left:490.8px;top:683.6px;width:210.8px"></div>
<div class="bar y" style="left:701.6px;top:683.6px;width:125.1px"></div>
<div class="bar g" style="left:826.7px;top:683.6px;width:85.9px"></div>
<div class="vs" style="left:543.8px;top:683.6px"></div>
<div class="vs" style="left:596.8px;top:683.6px"></div>
<div class="vs" style="left:649.8px;top:683.6px"></div>
<div class="vs" style="left:702.8px;top:683.6px"></div>
<div class="vs" style="left:755.8px;top:683.6px"></div>
<div class="vs" style="left:808.8px;top:683.6px"></div>
<div class="vs" style="left:861.8px;top:683.6px"></div>
<div class="rl" style="top:713.2px;width:484.8px"></div>
<div class="rn" style="top:715.7px">Slovenija - jugozahod</div>
<div class="bi" style="top:716.3px"><svg width="27" height="27" viewBox="0 0 27 27"><rect x=".6" y=".6" width="25.8" height="25.8" fill="#ffff00" stroke="#111" stroke-width="1.3"/><path filter="url(#ib)" d="M8.2 2.8 L11.3 2.8 L16.6 10.5 L14.4 11.4 L18.3 16.5 L16.1 17.3 L19.1 23.8 L11.3 15.4 L13.3 14.2 L9.6 9.6 L11.6 8.6Z" fill="#1d2230"/></svg></div>
<div class="bg2" style="top:716.1px"></div>
<div class="bar g" style="left:490.8px;top:716.3px;width:210.8px"></div>
<div class="bar y" style="left:701.6px;top:716.3px;width:125.1px"></div>
<div class="bar g" style="left:826.7px;top:716.3px;width:85.9px"></div>
<div class="vs" style="left:543.8px;top:716.3px"></div>
<div class="vs" style="left:596.8px;top:716.3px"></div>
<div class="vs" style="left:649.8px;top:716.3px"></div>
<div class="vs" style="left:702.8px;top:716.3px"></div>
<div class="vs" style="left:755.8px;top:716.3px"></div>
<div class="vs" style="left:808.8px;top:716.3px"></div>
<div class="vs" style="left:861.8px;top:716.3px"></div>
<div class="rl" style="top:745.9px;width:484.8px"></div>
<div class="rn" style="top:748.4px">Slovenija - osrednja</div>
<div class="bi" style="top:749px"><svg width="27" height="27" viewBox="0 0 27 27"><rect x=".6" y=".6" width="25.8" height="25.8" fill="#ffff00" stroke="#111" stroke-width="1.3"/><path filter="url(#ib)" d="M8.2 2.8 L11.3 2.8 L16.6 10.5 L14.4 11.4 L18.3 16.5 L16.1 17.3 L19.1 23.8 L11.3 15.4 L13.3 14.2 L9.6 9.6 L11.6 8.6Z" fill="#1d2230"/></svg></div>
<div class="bg2" style="top:748.8px"></div>
<div class="bar g" style="left:490.8px;top:749px;width:210.8px"></div>
<div class="bar y" style="left:701.6px;top:749px;width:125.1px"></div>
<div class="bar g" style="left:826.7px;top:749px;width:85.9px"></div>
<div class="vs" style="left:543.8px;top:749px"></div>
<div class="vs" style="left:596.8px;top:749px"></div>
<div class="vs" style="left:649.8px;top:749px"></div>
<div class="vs" style="left:702.8px;top:749px"></div>
<div class="vs" style="left:755.8px;top:749px"></div>
<div class="vs" style="left:808.8px;top:749px"></div>
<div class="vs" style="left:861.8px;top:749px"></div>
<div class="rl" style="top:778.6px;width:484.8px"></div>
<div class="rn" style="top:781.1px">Slovenija - jugovzhod</div>
<div class="bi" style="top:781.7px"><svg width="27" height="27" viewBox="0 0 27 27"><rect x=".6" y=".6" width="25.8" height="25.8" fill="#ffff00" stroke="#111" stroke-width="1.3"/><path filter="url(#ib)" d="M8.2 2.8 L11.3 2.8 L16.6 10.5 L14.4 11.4 L18.3 16.5 L16.1 17.3 L19.1 23.8 L11.3 15.4 L13.3 14.2 L9.6 9.6 L11.6 8.6Z" fill="#1d2230"/></svg></div>
<div class="bg2" style="top:781.5px"></div>
<div class="bar g" style="left:490.8px;top:781.7px;width:210.8px"></div>
<div class="bar y" style="left:701.6px;top:781.7px;width:125.1px"></div>
<div class="bar g" style="left:826.7px;top:781.7px;width:85.9px"></div>
<div class="vs" style="left:543.8px;top:781.7px"></div>
<div class="vs" style="left:596.8px;top:781.7px"></div>
<div class="vs" style="left:649.8px;top:781.7px"></div>
<div class="vs" style="left:702.8px;top:781.7px"></div>
<div class="vs" style="left:755.8px;top:781.7px"></div>
<div class="vs" style="left:808.8px;top:781.7px"></div>
<div class="vs" style="left:861.8px;top:781.7px"></div>
<div class="rl" style="top:811.3px;width:484.8px"></div>
<div class="rn" style="top:813.8px">Slovenija - severovzhod</div>
<div class="bi" style="top:814.4px"><svg width="27" height="27" viewBox="0 0 27 27"><rect x=".6" y=".6" width="25.8" height="25.8" fill="#ffff00" stroke="#111" stroke-width="1.3"/><path filter="url(#ib)" d="M8.2 2.8 L11.3 2.8 L16.6 10.5 L14.4 11.4 L18.3 16.5 L16.1 17.3 L19.1 23.8 L11.3 15.4 L13.3 14.2 L9.6 9.6 L11.6 8.6Z" fill="#1d2230"/></svg></div>
<div class="bg2" style="top:814.2px"></div>
<div class="bar g" style="left:490.8px;top:814.4px;width:229.2px"></div>
<div class="bar y" style="left:720px;top:814.4px;width:88.5px"></div>
<div class="bar g" style="left:808.5px;top:814.4px;width:104.1px"></div>
<div class="vs" style="left:543.8px;top:814.4px"></div>
<div class="vs" style="left:596.8px;top:814.4px"></div>
<div class="vs" style="left:649.8px;top:814.4px"></div>
<div class="vs" style="left:702.8px;top:814.4px"></div>
<div class="vs" style="left:755.8px;top:814.4px"></div>
<div class="vs" style="left:808.8px;top:814.4px"></div>
<div class="vs" style="left:861.8px;top:814.4px"></div>
<div class="rl" style="top:844.2px;width:928px"></div>
<div class="hl" style="left:475.5px">00</div>
<div class="tk" style="left:490.4px"></div>
<div class="hl" style="left:528.5px">03</div>
<div class="tk" style="left:543.4px"></div>
<div class="hl" style="left:581.5px">06</div>
<div class="tk" style="left:596.4px"></div>
<div class="hl" style="left:634.5px">09</div>
<div class="tk" style="left:649.4px"></div>
<div class="hl" style="left:687.5px">12</div>
<div class="tk" style="left:702.4px"></div>
<div class="hl" style="left:740.5px">15</div>
<div class="tk" style="left:755.4px"></div>
<div class="hl" style="left:793.5px">18</div>
<div class="tk" style="left:808.4px"></div>
<div class="hl" style="left:846.5px">21</div>
<div class="tk" style="left:861.4px"></div>
<div class="hl" style="left:898.4px">24</div>
<div class="tk" style="left:913.3px"></div>
</body></html>
